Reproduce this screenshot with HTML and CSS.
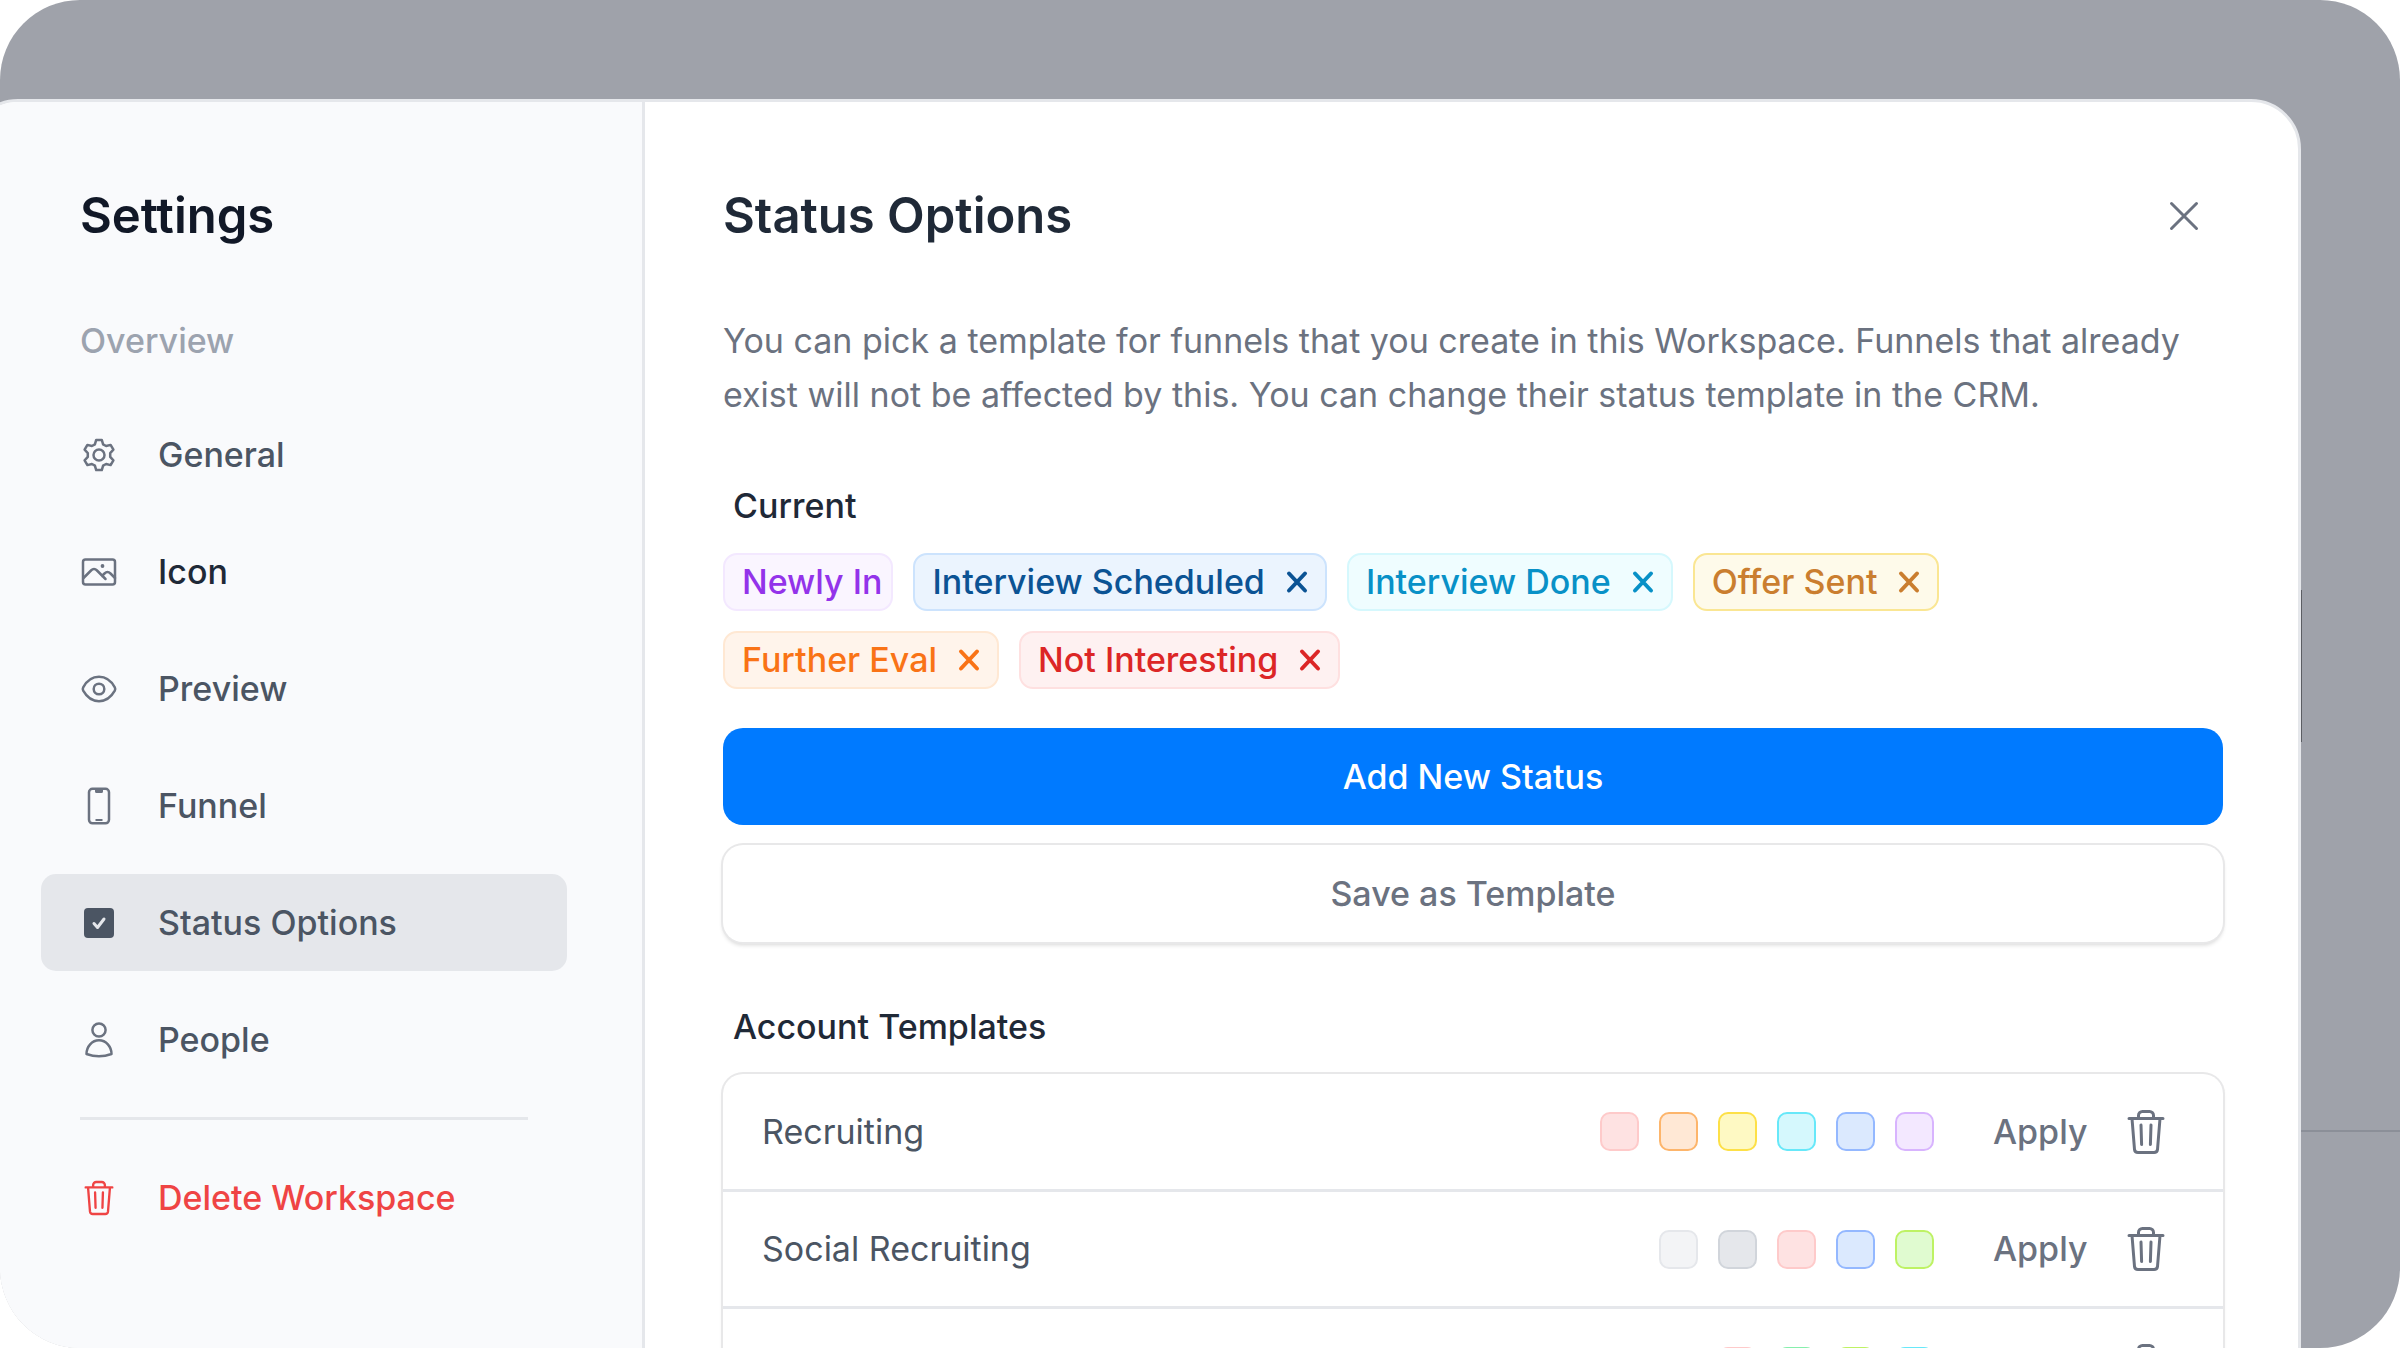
FILE: index.html
```html
<!DOCTYPE html>
<html lang="en">
<head>
    <meta charset="UTF-8">
    <meta name="viewport" content="width=device-width, initial-scale=1.0">
    <title>Workspace Settings</title>
    <link rel="stylesheet" href="styles.css">
</head>
<body>
    <!-- Shared icons -->
    <svg class="sprite" aria-hidden="true">
        <symbol id="trash" viewBox="0 0 38 46">
            <path d="M2 9.500h34M5 9.500l2.500 31a3.500 3.500 0 0 0 3.500 3h16a3.500 3.500 0 0 0 3.500-3l2.500-31M11.500 9V6.500a4 4 0 0 1 4-4h7a4 4 0 0 1 4 4V9M14 16l.6 19.500M24 16l-.6 19.500"/>
        </symbol>
        <symbol id="cross" viewBox="0 0 22 24">
            <path d="M3 3.500l16 17M19 3.500L3 20.500"/>
        </symbol>
    </svg>

    <div class="app">
        <div class="page-edge"></div>
        <div class="page-line"></div>

        <div class="modal">
            <!-- Sidebar -->
            <aside class="sidebar">
                <h2>Settings</h2>
                <p class="section-name">Overview</p>
                <nav class="menu">
                    <a href="#general" class="menu-item">
                        <svg class="icon" viewBox="0 0 40 40"><path d="M17.200 4.900h5.600l1.300 4.400 3 1.700 4.500-1.100 2.800 4.800-3.200 3.400v3.800l3.200 3.400-2.800 4.800-4.500-1.100-3 1.700-1.300 4.400h-5.600l-1.300-4.400-3-1.700-4.500 1.100-2.800-4.800 3.200-3.400v-3.800l-3.200-3.400 2.800-4.800 4.500 1.100 3-1.700z"/><circle cx="20" cy="20" r="5.500"/></svg>
                        General
                    </a>
                    <a href="#icon" class="menu-item dark">
                        <svg class="icon" viewBox="0 0 40 40"><rect x="4" y="7.500" width="32" height="25" rx="2.500"/><path d="M4.500 26l7.500-7.500c2-2 4-2 6 0l8.500 8.500M23 24l2.500-2.500c2-2 4-2 6 0L36 26"/><circle class="dot" cx="23.500" cy="14" r="1.900"/></svg>
                        Icon
                    </a>
                    <a href="#preview" class="menu-item">
                        <svg class="icon" viewBox="0 0 40 40"><path d="M4.200 18.300C8 11.500 13.500 7.800 20 7.800s12 3.700 15.800 10.500q.9 1.700 0 3.400C32 28.500 26.500 32.200 20 32.200S8 28.500 4.200 21.700q-.9-1.700 0-3.400z"/><circle cx="20" cy="20" r="5.300"/></svg>
                        Preview
                    </a>
                    <a href="#funnel" class="menu-item">
                        <svg class="icon" viewBox="0 0 40 40"><rect x="10" y="2.800" width="20" height="34.500" rx="3.500"/><path class="dot" d="M16 3h8v2.500a1.500 1.500 0 0 1-1.500 1.500h-5A1.500 1.500 0 0 1 16 5.500zM16.500 33h7v2h-7z"/></svg>
                        Funnel
                    </a>
                    <a href="#status" class="menu-item active">
                        <svg class="icon" viewBox="0 0 40 40"><rect class="box" x="5" y="5" width="30" height="30" rx="4"/><path class="check" d="M15 20.500l3.500 4 6.500-8.500"/></svg>
                        Status Options
                    </a>
                    <a href="#people" class="menu-item">
                        <svg class="icon" viewBox="0 0 40 40"><circle cx="20" cy="10" r="6.600"/><path d="M7.500 34c0-7.500 5.500-13.700 12.500-13.700S32.500 26.500 32.500 34Q20 38.500 7.500 34z"/></svg>
                        People
                    </a>
                </nav>
                <hr>
                <a href="#delete" class="menu-item danger">
                    <svg class="icon trash-small"><use href="#trash"/></svg>
                    Delete Workspace
                </a>
            </aside>

            <!-- Status options -->
            <main class="content">
                <header class="content-header">
                    <h1>Status Options</h1>
                    <button class="close" aria-label="Close">
                        <svg viewBox="0 0 30 30"><path d="M2.500 2.500l25 25M27.500 2.500l-25 25"/></svg>
                    </button>
                </header>

                <p class="description">You can pick a template for funnels that you create in this Workspace. Funnels that already exist will not be affected by this. You can change their status template in the CRM.</p>

                <h3>Current</h3>
                <div class="tags">
                    <span class="tag purple">Newly In</span>
                    <span class="tag blue">Interview Scheduled <button aria-label="Remove Interview Scheduled"><svg><use href="#cross"/></svg></button></span>
                    <span class="tag cyan">Interview Done <button aria-label="Remove Interview Done"><svg><use href="#cross"/></svg></button></span>
                    <span class="tag yellow">Offer Sent <button aria-label="Remove Offer Sent"><svg><use href="#cross"/></svg></button></span>
                    <span class="tag orange">Further Eval <button aria-label="Remove Further Eval"><svg><use href="#cross"/></svg></button></span>
                    <span class="tag red">Not Interesting <button aria-label="Remove Not Interesting"><svg><use href="#cross"/></svg></button></span>
                </div>

                <div class="actions">
                    <button class="btn btn-primary">Add New Status</button>
                    <button class="btn btn-plain">Save as Template</button>
                </div>

                <h3>Account Templates</h3>
                <ul class="templates">
                    <li>
                        <span class="name">Recruiting</span>
                        <span class="swatches">
                            <i class="sw-red"></i><i class="sw-orange"></i><i class="sw-yellow"></i><i class="sw-cyan"></i><i class="sw-blue"></i><i class="sw-purple"></i>
                        </span>
                        <button class="apply">Apply</button>
                        <button class="remove" aria-label="Delete template"><svg><use href="#trash"/></svg></button>
                    </li>
                    <li>
                        <span class="name">Social Recruiting</span>
                        <span class="swatches">
                            <i class="sw-light"></i><i class="sw-gray"></i><i class="sw-red"></i><i class="sw-blue"></i><i class="sw-lime"></i>
                        </span>
                        <button class="apply">Apply</button>
                        <button class="remove" aria-label="Delete template"><svg><use href="#trash"/></svg></button>
                    </li>
                    <li>
                        <span class="name"></span>
                        <span class="swatches">
                            <i class="sw-red"></i><i class="sw-green"></i><i class="sw-lime"></i><i class="sw-cyan"></i>
                        </span>
                        <button class="apply" aria-label="Apply"></button>
                        <button class="remove" aria-label="Delete template"><svg><use href="#trash"/></svg></button>
                    </li>
                </ul>
            </main>
        </div>
    </div>
</body>
</html>
```
FILE: styles.css
```css
* {
    box-sizing: border-box;
}
body {
    margin: 0;
    background-color: #fff;
    font-family: Inter, sans-serif;
    font-size: 34px;
    line-height: 54px;
    color: #4b5563;
}
h1, h2, h3, p, ul {
    margin: 0;
    padding: 0;
}
h1, h2 {
    font-size: 49px;
    line-height: 60px;
    font-weight: 600;
}
h1 {
    color: #1f2937;
}
h2 {
    color: #111827;
}
h3 {
    padding-left: 10px;
    font-size: 34px;
    font-weight: 500;
    color: #1f2937;
}
button {
    padding: 0;
    border: none;
    background: none;
    font-family: inherit;
    font-size: inherit;
    line-height: inherit;
    color: inherit;
    cursor: pointer;
}
svg {
    display: block;
    fill: none;
    stroke: currentColor;
    stroke-width: 3;
    stroke-linecap: round;
    stroke-linejoin: round;
}
.sprite {
    position: absolute;
    width: 0;
    height: 0;
}

/* Dimmed page behind the modal */
.app {
    position: relative;
    display: flex;
    height: 100vh;
    padding: 99px 99px 0 0;
    overflow: hidden;
    border-radius: 80px;
    background-color: #9fa2aa;
}
.page-line {
    position: absolute;
    top: 1130px;
    right: 0;
    width: 120px;
    height: 2px;
    background-color: #8b8f98;
}
.page-edge {
    position: absolute;
    top: 590px;
    right: 98px;
    width: 20px;
    height: 152px;
    background-color: #5c5e63;
}

.modal {
    position: relative;
    display: flex;
    flex: 1;
    min-height: 1400px;
    margin-left: -32px;
    overflow: hidden;
    border: 3px solid #e5e7eb;
    border-radius: 50px;
    background-color: #fff;
}

/* Sidebar */
.sidebar {
    flex: none;
    width: 674px;
    padding: 84px 75px 0 70px;
    border-right: 3px solid #e5e7eb;
    background-color: #f9fafc;
}
.sidebar h2, .section-name {
    padding-left: 39px;
}
.section-name {
    margin-top: 68px;
    font-weight: 500;
    color: #9ca3af;
}
.menu {
    display: flex;
    flex-direction: column;
    gap: 20px;
    margin-top: 38px;
}
.menu-item {
    display: flex;
    align-items: center;
    gap: 39px;
    height: 97px;
    padding-left: 38px;
    border-radius: 15px;
    font-weight: 500;
    color: #4b5563;
    text-decoration: none;
}
.menu-item.dark {
    color: #1f2937;
}
.menu-item.active {
    background-color: #e5e7eb;
}
.menu-item.danger {
    color: #ef4444;
}
.icon {
    flex: none;
    width: 40px;
    height: 40px;
    color: #6b7280;
    stroke-width: 2.5;
}
.icon .dot {
    fill: currentColor;
    stroke: none;
}
.icon .box {
    fill: #4b5563;
    stroke: none;
}
.icon .check {
    stroke: #e5e7eb;
    stroke-width: 3;
}
.icon.trash-small {
    height: 36px;
    color: #ef4444;
    stroke-width: 3;
}
.sidebar hr {
    height: 3px;
    margin: 29px 39px;
    border: none;
    background-color: #e5e7eb;
}

/* Content */
.content {
    flex: 1;
    padding: 84px 75px 0 78px;
}
.content-header {
    display: flex;
    align-items: center;
    justify-content: space-between;
}
.close {
    margin-right: 24px;
    color: #6b7280;
}
.close svg {
    width: 30px;
    height: 30px;
}
.description {
    margin: 68px 0 57px;
    color: #6b7280;
}
.tags {
    display: flex;
    flex-wrap: wrap;
    gap: 20px;
    max-width: 1300px;
    margin-top: 20px;
}
.tag {
    display: flex;
    align-items: center;
    gap: 21px;
    height: 58px;
    padding: 0 17px;
    border: 2px solid;
    border-radius: 14px;
    font-weight: 500;
}
.tag:first-child {
    padding-right: 9px;
}
.tag svg {
    width: 22px;
    height: 24px;
    stroke-width: 4;
}
.purple {
    color: #9333ea;
    background-color: #faf5ff;
    border-color: #f3e8ff;
}
.blue {
    color: #0b5394;
    background-color: #ebf4fe;
    border-color: #cce3fd;
}
.cyan {
    color: #0891c7;
    background-color: #effdff;
    border-color: #d5f8fd;
}
.yellow {
    color: #ca7e2f;
    background-color: #fefaea;
    border-color: #fae693;
}
.orange {
    color: #f97316;
    background-color: #fff4eb;
    border-color: #ffe8d3;
}
.red {
    color: #dc2626;
    background-color: #fef1f1;
    border-color: #fee0e0;
}
.actions {
    display: grid;
    gap: 20px;
    margin: 39px 0 58px;
}
.btn {
    height: 97px;
    border-radius: 20px;
    font-weight: 500;
}
.btn-primary {
    color: #fff;
    background-color: #007aff;
}
.btn-plain {
    color: #6b7280;
    background-color: #fff;
    box-shadow: 0 0 0 2px #e8e8e9, 0 3px 4px rgba(0, 0, 0, 0.16);
}
.templates {
    margin-top: 20px;
    list-style-type: none;
    border-radius: 20px;
    box-shadow: 0 0 0 2px #e8e8e9, 0 3px 4px rgba(0, 0, 0, 0.1);
}
.templates li {
    display: flex;
    align-items: center;
    height: 117px;
    padding: 0 58px 0 39px;
    border-bottom: 3px solid #e5e7eb;
}
.templates li:first-child {
    height: 118px;
}
.name {
    flex: 1;
}
.swatches {
    display: flex;
    gap: 20px;
    margin-right: 59px;
}
.swatches i {
    width: 39px;
    height: 39px;
    border: 2px solid;
    border-radius: 10px;
}
.swatches .sw-red {
    background-color: #fee2e2;
    border-color: #fecaca;
}
.swatches .sw-orange {
    background-color: #ffe8d5;
    border-color: #fdb56b;
}
.swatches .sw-yellow {
    background-color: #fef9c3;
    border-color: #fde047;
}
.swatches .sw-cyan {
    background-color: #d5f8fd;
    border-color: #67e8f9;
}
.swatches .sw-blue {
    background-color: #dbe9fe;
    border-color: #94b8ff;
}
.swatches .sw-purple {
    background-color: #f3e8ff;
    border-color: #d8b4fe;
}
.swatches .sw-light {
    background-color: #f3f4f6;
    border-color: #e5e7eb;
}
.swatches .sw-gray {
    background-color: #e5e7eb;
    border-color: #d1d5db;
}
.swatches .sw-lime {
    background-color: #e0fbd0;
    border-color: #bef264;
}
.swatches .sw-green {
    background-color: #dcfce7;
    border-color: #86efac;
}
.apply {
    width: 93px;
    font-weight: 500;
    color: #6b7280;
}
.remove {
    margin-left: 41px;
    color: #6b7280;
}
.remove svg {
    width: 38px;
    height: 46px;
}
```
